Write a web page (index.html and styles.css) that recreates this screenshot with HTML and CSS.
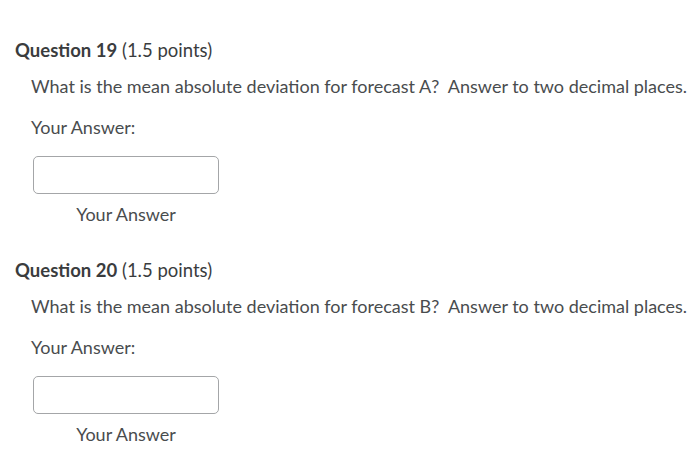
FILE: index.html
```html
<!DOCTYPE html>
<html>
<head>
<meta charset="utf-8">
<link rel="stylesheet" href="styles.css">
</head>
<body>
<div class="page">
  <section class="question">
    <h2 class="q-title"><span class="q-num">Question 19</span> (1.5 points)</h2>
    <p class="q-text">What is the mean absolute deviation for forecast A?&nbsp; Answer to two decimal places.</p>
    <p class="answer-label">Your Answer:</p>
    <div class="answer-field">
      <div class="answer-box"></div>
      <div class="answer-caption">Your Answer</div>
    </div>
  </section>
  <section class="question">
    <h2 class="q-title"><span class="q-num">Question 20</span> (1.5 points)</h2>
    <p class="q-text">What is the mean absolute deviation for forecast B?&nbsp; Answer to two decimal places.</p>
    <p class="answer-label">Your Answer:</p>
    <div class="answer-field">
      <div class="answer-box"></div>
      <div class="answer-caption">Your Answer</div>
    </div>
  </section>
</div>
</body>
</html>
```
FILE: styles.css
```css
html, body {
  margin: 0;
  padding: 0;
  background: #ffffff;
}
body {
  font-family: Lato, "Open Sans", sans-serif;
  color: #494c4e;
}
.page {
  padding: 39px 0 0 15px;
  display: flex;
  flex-direction: column;
  gap: 34px;
}
.question {
  display: flex;
  flex-direction: column;
}
.q-title {
  margin: 0;
  font-size: 18.5px;
  font-weight: 400;
  line-height: 23px;
  color: #3a3c3e;
}
.q-num {
  font-weight: 700;
}
.q-text {
  margin: 13px 0 0 16px;
  font-size: 18px;
  line-height: 22px;
}
.answer-label {
  margin: 19px 0 0 16px;
  font-size: 18px;
  line-height: 22px;
}
.answer-field {
  margin: 18px 0 0 18px;
  width: 186px;
  display: flex;
  flex-direction: column;
  align-items: center;
}
.answer-box {
  width: 186px;
  height: 38px;
  box-sizing: border-box;
  border: 1px solid #a4a6a8;
  border-radius: 5px;
}
.answer-caption {
  margin-top: 9px;
  font-size: 18px;
  line-height: 22px;
}
```
